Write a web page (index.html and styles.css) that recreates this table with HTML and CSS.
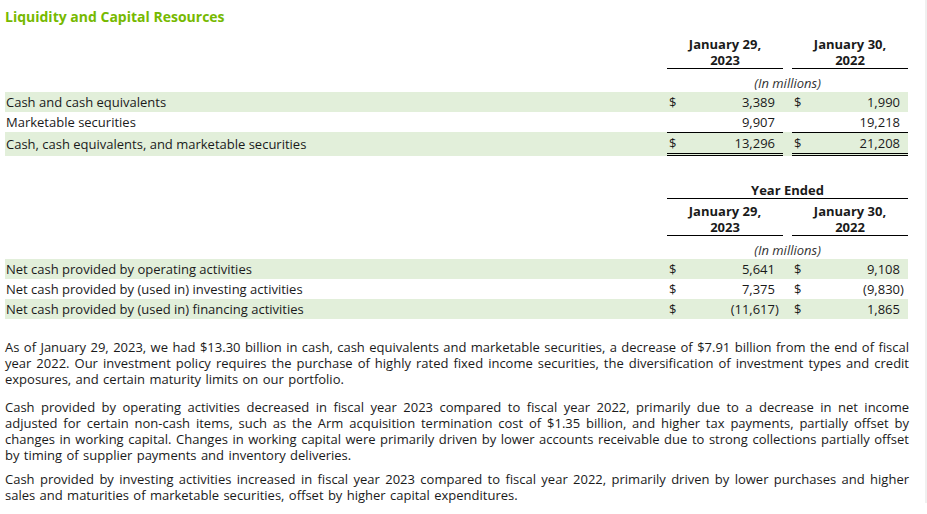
FILE: index.html
```html
<!DOCTYPE html>
<html lang="en">
<head>
<meta charset="utf-8">
<title>Liquidity and Capital Resources</title>
<link rel="stylesheet" href="styles.css">
</head>
<body>
<main class="page">
  <h2 class="title">Liquidity and Capital Resources</h2>

  <table class="fin fin-balance">
    <colgroup>
      <col class="c-label"><col class="c-cur"><col class="c-num"><col class="c-par">
      <col class="c-gap">
      <col class="c-cur"><col class="c-num"><col class="c-par">
    </colgroup>
    <thead>
      <tr>
        <th></th>
        <th colspan="3" class="period">January 29,<br>2023</th>
        <th></th>
        <th colspan="3" class="period">January 30,<br>2022</th>
      </tr>
      <tr>
        <th></th>
        <th colspan="7" class="unit">(In millions)</th>
      </tr>
    </thead>
    <tbody>
      <tr class="band">
        <td class="label">Cash and cash equivalents</td>
        <td class="cur">$</td><td class="num">3,389</td><td class="par"></td>
        <td></td>
        <td class="cur">$</td><td class="num">1,990</td><td class="par"></td>
      </tr>
      <tr>
        <td class="label">Marketable securities</td>
        <td class="cur"></td><td class="num">9,907</td><td class="par"></td>
        <td></td>
        <td class="cur"></td><td class="num">19,218</td><td class="par"></td>
      </tr>
      <tr class="band total">
        <td class="label">Cash, cash equivalents, and marketable securities</td>
        <td class="cur ruled">$</td><td class="num ruled">13,296</td><td class="par ruled"></td>
        <td></td>
        <td class="cur ruled">$</td><td class="num ruled">21,208</td><td class="par ruled"></td>
      </tr>
    </tbody>
  </table>

  <table class="fin fin-flows">
    <colgroup>
      <col class="c-label"><col class="c-cur"><col class="c-num"><col class="c-par">
      <col class="c-gap">
      <col class="c-cur"><col class="c-num"><col class="c-par">
    </colgroup>
    <thead>
      <tr>
        <th></th>
        <th colspan="7" class="span-head">Year Ended</th>
      </tr>
      <tr>
        <th></th>
        <th colspan="3" class="period">January 29,<br>2023</th>
        <th></th>
        <th colspan="3" class="period">January 30,<br>2022</th>
      </tr>
      <tr>
        <th></th>
        <th colspan="7" class="unit">(In millions)</th>
      </tr>
    </thead>
    <tbody>
      <tr class="band">
        <td class="label">Net cash provided by operating activities</td>
        <td class="cur">$</td><td class="num">5,641</td><td class="par"></td>
        <td></td>
        <td class="cur">$</td><td class="num">9,108</td><td class="par"></td>
      </tr>
      <tr>
        <td class="label">Net cash provided by (used in) investing activities</td>
        <td class="cur">$</td><td class="num">7,375</td><td class="par"></td>
        <td></td>
        <td class="cur">$</td><td class="num">(9,830</td><td class="par">)</td>
      </tr>
      <tr class="band">
        <td class="label">Net cash provided by (used in) financing activities</td>
        <td class="cur">$</td><td class="num">(11,617</td><td class="par">)</td>
        <td></td>
        <td class="cur">$</td><td class="num">1,865</td><td class="par"></td>
      </tr>
    </tbody>
  </table>

  <p class="para para-first">As of January 29, 2023, we had $13.30 billion in cash, cash equivalents and marketable securities, a decrease of $7.91 billion from the end of fiscal year 2022. Our investment policy requires the purchase of highly rated fixed income securities, the diversification of investment types and credit exposures, and certain maturity limits on our portfolio.</p>
  <p class="para para-second">Cash provided by operating activities decreased in fiscal year 2023 compared to fiscal year 2022, primarily due to a decrease in net income adjusted for certain non-cash items, such as the Arm acquisition termination cost of $1.35 billion, and higher tax payments, partially offset by changes in working capital. Changes in working capital were primarily driven by lower accounts receivable due to strong collections partially offset by timing of supplier payments and inventory deliveries.</p>
  <p class="para para-third">Cash provided by investing activities increased in fiscal year 2023 compared to fiscal year 2022, primarily driven by lower purchases and higher sales and maturities of marketable securities, offset by higher capital expenditures.</p>
</main>
</body>
</html>
```

FILE: styles.css
```css
html {
  background: #ffffff;
  border-right: 2px solid #f0f0f0;
}

body {
  margin: 0;
  font-family: "Open Sans", "Noto Sans", "Liberation Sans", sans-serif;
  font-size: 13px;
  line-height: 16px;
  color: #1a1a1a;
}

.page {
  width: 904px;
  padding: 7px 0 0 5px;
}

.title {
  margin: 0;
  font-size: 14px;
  line-height: 20px;
  font-weight: 700;
  color: #76b900;
}

.fin {
  width: 903px;
  table-layout: fixed;
  border-collapse: separate;
  border-spacing: 0;
}

.fin-balance {
  margin-top: 5px;
}

.fin-flows {
  margin-top: 26px;
}

.c-label { width: 662px; }
.c-cur { width: 22px; }
.c-num { width: 86px; }
.c-par { width: 8px; }
.c-gap { width: 9px; }

.fin th {
  padding: 0;
  font-weight: 700;
  text-align: center;
}

.fin .period {
  padding: 4px 0 0;
  line-height: 16px;
  border-bottom: 1px solid #000;
}

.fin .span-head {
  line-height: 16px;
  border-bottom: 1px solid #000;
}

.fin .unit {
  padding: 6px 0 1px;
  line-height: 16px;
  font-weight: 400;
  font-style: italic;
  color: #333;
}

.fin td {
  padding: 0;
  height: 20px;
  line-height: 20px;
  white-space: nowrap;
  vertical-align: middle;
}

.fin tr.band td {
  background: #e2efda;
}

.fin .label {
  padding-left: 1px;
}

.fin .cur {
  padding-left: 2px;
  text-align: left;
}

.fin .num {
  text-align: right;
}

.fin .par {
  text-align: left;
}

.fin .ruled {
  border-top: 1px solid #000;
  border-bottom: 3px double #000;
}

.para {
  margin: 0;
  text-align: justify;
  word-spacing: 1px;
}

.para-first { margin-top: 20px; }
.para-second { margin-top: 12px; }
.para-third { margin-top: 8px; }
```
